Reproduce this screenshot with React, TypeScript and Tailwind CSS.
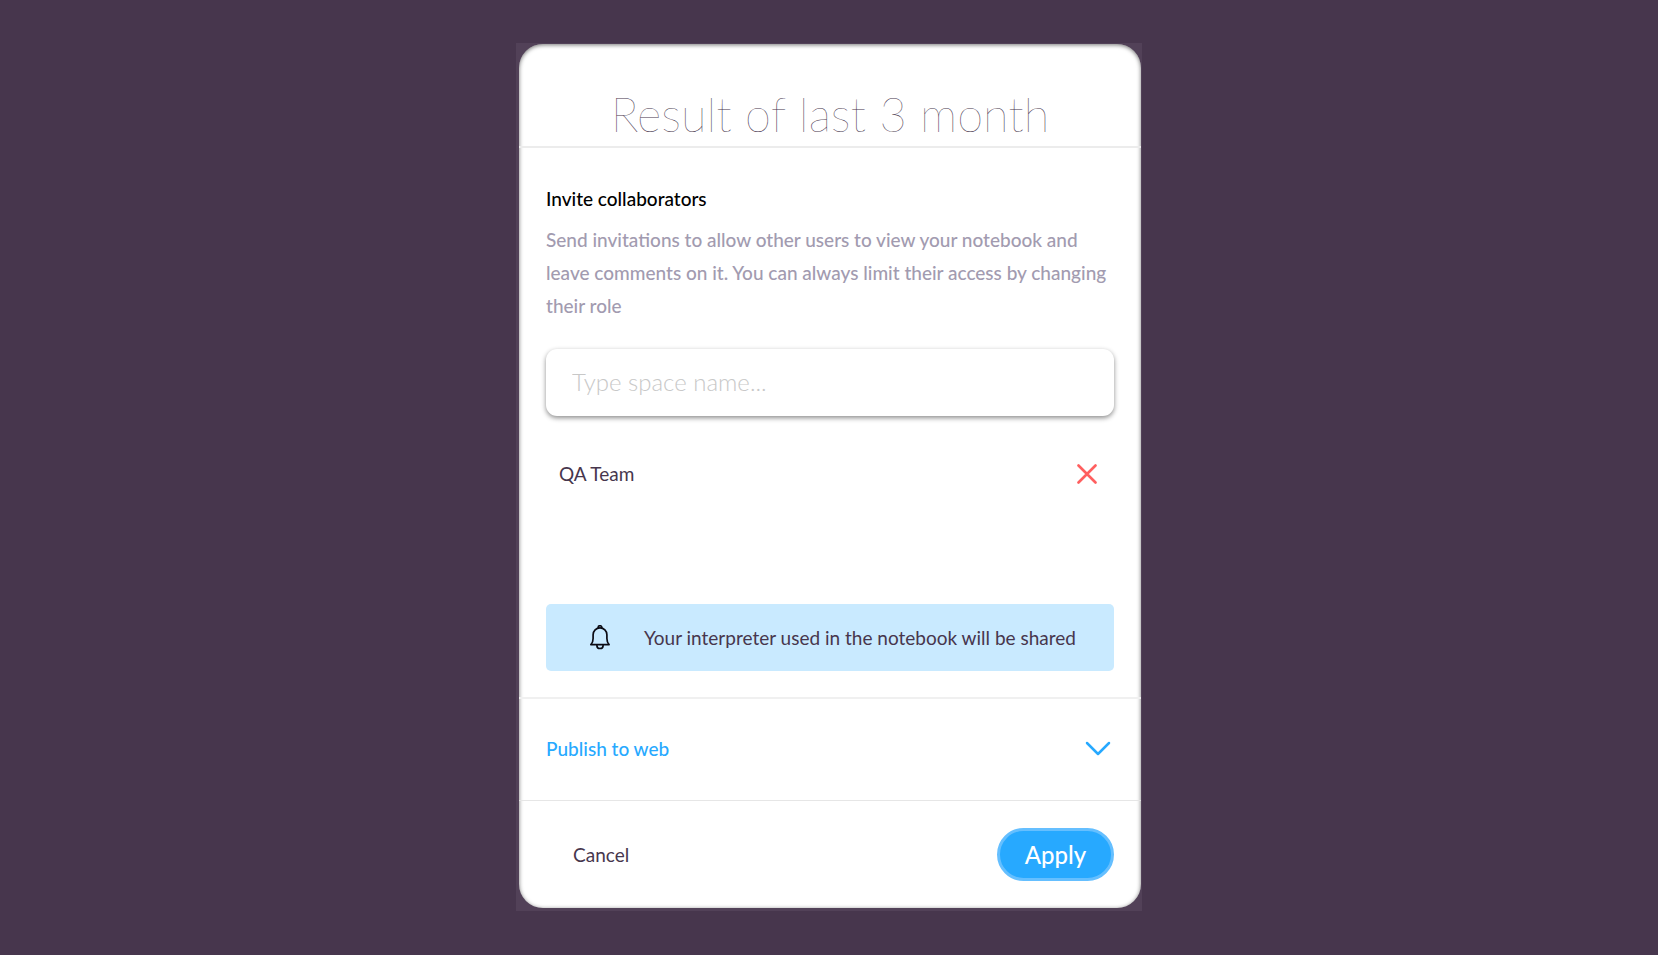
export default function App() {
  return (
    <div className="flex min-h-screen items-start justify-center bg-[#47364d] pt-[43px] pb-[43px] font-[Lato,sans-serif] text-[19px] text-[#47364d]">
      <div className="w-full max-w-[626px] bg-[#524158] pt-px pr-px pb-[3px] pl-[3px]">
        <main className="rounded-[24px] bg-white shadow-[inset_0_1px_4px_rgba(0,0,0,0.55)]">
          <header className="border-b-2 border-[#ececec] pt-[41px] pb-[3px] text-center">
            <h1 className="text-[47px] leading-[58px] font-thin">Result of last 3 month</h1>
          </header>
          <section className="border-b-2 border-[#f0f0f0] px-[27px] pt-[37px] pb-[26px]">
            <h2 className="leading-7 font-medium text-black">Invite collaborators</h2>
            <p className="mt-[10px] leading-[33px] font-medium text-[#a29bb0]">
              Send invitations to allow other users to view your notebook and leave comments on it. You can always limit
              their access by changing their role
            </p>
            <input
              type="text"
              aria-label="Space name"
              placeholder="Type space name..."
              className="mt-[27px] block h-[67px] w-full rounded-[11px] px-[26px] pb-[2px] text-[24px] font-light shadow-[0_2px_5px_rgba(0,0,0,0.45)] outline-none placeholder:text-[#c8c8c8]"
            />
            <div className="mt-10 flex h-9 items-center justify-between pr-[17px] pl-[13px]">
              <span>QA Team</span>
              <button type="button" aria-label="Remove QA Team">
                <svg width="20" height="20" viewBox="0 0 20 20" fill="none" stroke="#ff5f5f" strokeWidth="2.6" strokeLinecap="round">
                  <path d="M1.5 1.5 18.5 18.5M18.5 1.5 1.5 18.5" />
                </svg>
              </button>
            </div>
            <div className="mt-28 flex min-h-[67px] items-center rounded-[5px] bg-[#c9eaff] pr-6 pl-11">
              <svg className="shrink-0" width="20" height="25" viewBox="0 0 20 25" fill="none" stroke="#0b0b14" strokeWidth="1.7" strokeLinecap="round" strokeLinejoin="round">
                <path d="M.9 19.6H19.1C17.4 17.9 16.9 16 16.9 13.5V9.8A6.9 6.9 0 0 0 3.1 9.8V13.5C3.1 16 2.6 17.9.9 19.6Z" />
                <path d="M8.2 3.1V2.5A1.8 1.8 0 0 1 11.8 2.5V3.1M6.9 20.4a3.1 3.1 0 0 0 6.2 0" />
              </svg>
              <span className="ml-[34px] pt-[2px]">Your interpreter used in the notebook will be shared</span>
            </div>
          </section>
          <button type="button" aria-expanded="false" className="flex h-[102px] w-full items-center justify-between border-b border-[#e6e6e6] pr-[30px] pb-[2px] pl-[27px] text-left font-medium text-[#27a9ff]">
            <span className="pt-[2px]">Publish to web</span>
            <svg width="26" height="16" viewBox="0 0 26 16" fill="none" stroke="#27a9ff" strokeWidth="2.5" strokeLinecap="round" strokeLinejoin="round">
              <path d="M2 2 13 13 24 2" />
            </svg>
          </button>
          <footer className="flex items-center justify-between px-[27px] pt-[27px] pb-[27px]">
            <button type="button" className="ml-[27px] pt-[2px]">Cancel</button>
            <button type="button" className="h-[53px] w-[117px] rounded-full border-[3px] border-[#65bfff] bg-[#27a9ff] text-[24px] font-medium text-white">
              Apply
            </button>
          </footer>
        </main>
      </div>
    </div>
  );
}
